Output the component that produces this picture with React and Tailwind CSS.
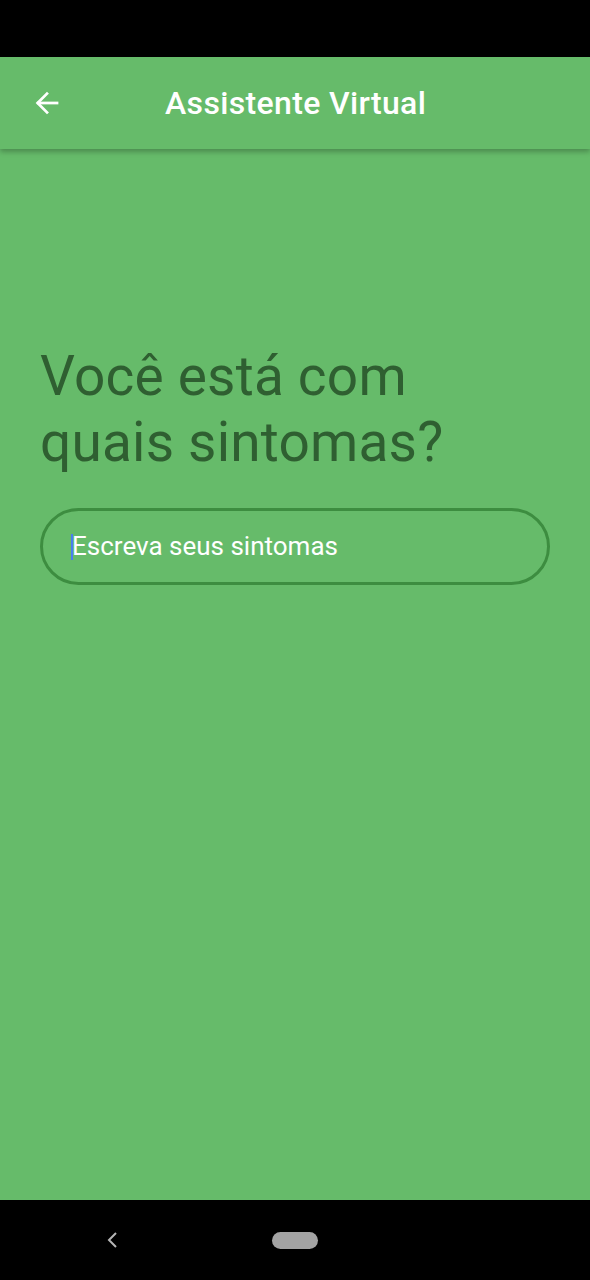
import React from 'react';

export default function App() {
  return (
    <div className="w-[590px] h-[1280px] flex flex-col bg-[#66bb6a] overflow-hidden" style={{ fontFamily: 'Roboto, "Noto Sans", sans-serif' }}>
      {/* Status bar */}
      <div className="h-[57px] bg-black shrink-0" />

      {/* App bar */}
      <div className="h-[92px] shrink-0 flex items-center bg-[#66bb6a] shadow-[0_3px_5px_rgba(0,0,0,0.25)] relative z-10">
        <div className="w-[92px] flex justify-center pl-[2px]">
          <svg width="30" height="30" viewBox="0 0 24 24" fill="none" stroke="white" strokeWidth="2.2" strokeLinecap="square">
            <path d="M20 12H5" />
            <path d="M12 4.5L4.5 12L12 19.5" />
          </svg>
        </div>
        <h1 className="ml-[73px] text-white text-[32px] font-medium tracking-[0.35px]">Assistente Virtual</h1>
      </div>

      {/* Body */}
      <div className="flex-1 flex flex-col px-[40px] pt-[194px]">
        <h2 className="text-[#2f5f31] text-[55px] leading-[66px] tracking-[0.2px]">
          Você está com
          <br />
          quais sintomas?
        </h2>
        <div className="mt-[33px] h-[77px] rounded-full border-[3px] border-[#3d8d40] flex items-center pl-[28px]">
          <span className="w-[2px] h-[26px] bg-[#4a7df0]" />
          <span className="text-white text-[26px] -ml-[1px]">Escreva seus sintomas</span>
        </div>
      </div>

      {/* Navigation bar */}
      <div className="h-[80px] bg-black shrink-0 flex items-center">
        <div className="w-[226px] flex justify-center">
          <svg width="14" height="20" viewBox="0 0 14 20" fill="none" stroke="#b5b5b5" strokeWidth="2">
            <path d="M10 3L3 10L10 17" />
          </svg>
        </div>
        <div className="ml-[46px] w-[46px] h-[17px] rounded-full bg-[#a3a3a3]" />
      </div>
    </div>
  );
}
